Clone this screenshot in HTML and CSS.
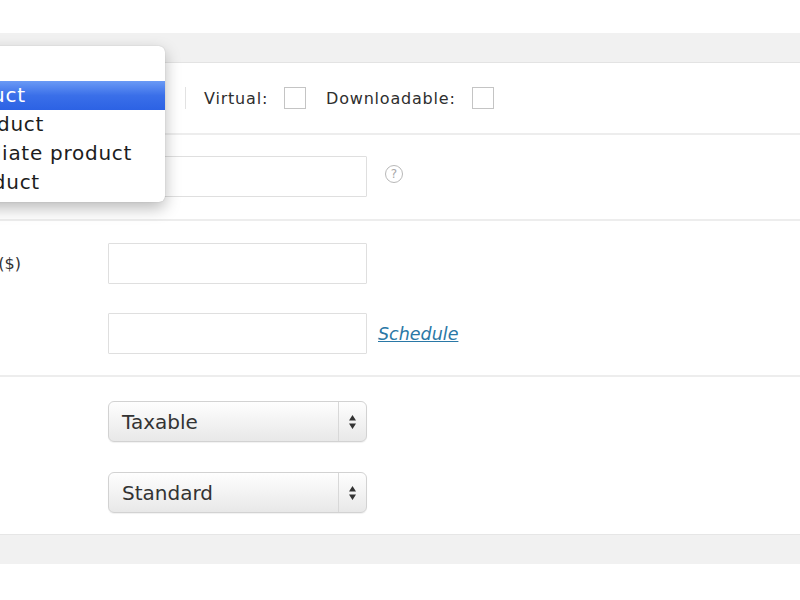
FILE: index.html
```html
<!DOCTYPE html>
<html lang="en">
<head>
  <meta charset="UTF-8">
  <meta name="viewport" content="width=device-width, initial-scale=1.0">
  <title>Product data</title>
  <link rel="stylesheet" href="styles.css">
</head>
<body>
  <div class="frame">
    <div class="panel">
      <div class="row row-type">
        <div class="type-select">Simple product</div>
        <span class="divider"></span>
        <label class="check-label">Virtual:</label>
        <span class="checkbox"></span>
        <label class="check-label">Downloadable:</label>
        <span class="checkbox"></span>
      </div>

      <div class="row">
        <div class="field">
          <span class="label"></span>
          <input type="text" class="text-input">
          <span class="help">?</span>
        </div>
      </div>

      <div class="row row-price">
        <div class="field">
          <span class="label"><span class="clip"><span>Regular price ($)</span></span></span>
          <input type="text" class="text-input">
        </div>
        <div class="field">
          <span class="label"></span>
          <input type="text" class="text-input">
          <a href="#" class="schedule">Schedule</a>
        </div>
      </div>

      <div class="row row-tax">
        <div class="field">
          <span class="label"></span>
          <div class="select">
            <span class="select-text">Taxable</span>
            <span class="select-arrows">
              <svg width="9" height="16" viewBox="0 0 9 16"><path d="M4.5 1 L8 6.5 H1 Z M1 9.5 H8 L4.5 15 Z" fill="#333"/></svg>
            </span>
          </div>
        </div>
        <div class="field">
          <span class="label"></span>
          <div class="select">
            <span class="select-text">Standard</span>
            <span class="select-arrows">
              <svg width="9" height="16" viewBox="0 0 9 16"><path d="M4.5 1 L8 6.5 H1 Z M1 9.5 H8 L4.5 15 Z" fill="#333"/></svg>
            </span>
          </div>
        </div>
      </div>
    </div>
  </div>

  <ul class="menu">
    <li class="menu-blank"></li>
    <li class="menu-item active">Simple product</li>
    <li class="menu-item">Grouped product</li>
    <li class="menu-item">External/Affiliate product</li>
    <li class="menu-item">Variable product</li>
  </ul>
</body>
</html>
```

FILE: styles.css
```css
body {
  margin: 0;
  padding: 0;
  background-color: #fff;
  font-family: 'DejaVu Sans', Verdana, sans-serif;
  color: #333;
  overflow: hidden;
}

.frame {
  margin-top: 33px;
  background-color: #f1f1f1;
  padding: 29px 0;
}

.panel {
  background-color: #fff;
  border-top: 1px solid #e3e3e3;
  border-bottom: 1px solid #e6e6e6;
}

.row {
  border-top: 2px solid #ededed;
}

.row-type {
  border-top: none;
  height: 70px;
  display: flex;
  align-items: center;
}

.type-select {
  width: 165px;
  color: transparent;
}

.divider {
  width: 1px;
  height: 22px;
  background-color: #e2e2e2;
  margin: 0 18px 0 20px;
}

.check-label {
  font-size: 16px;
  letter-spacing: 0.8px;
  color: #2e2e2e;
}

.checkbox {
  width: 20px;
  height: 20px;
  border: 1px solid #c4c4c4;
  background-color: #fff;
  margin: 0 20px 0 16px;
}

.row > .field:first-child {
  padding-top: 21px;
}

.row > .field:last-child {
  padding-bottom: 22px;
}

.row-price > .field:first-child {
  padding-top: 22px;
}

.row-price > .field + .field {
  margin-top: 29px;
}

.row-price > .field:last-child {
  padding-bottom: 21px;
}

.row-tax > .field:first-child {
  padding-top: 24px;
}

.row-tax > .field + .field {
  margin-top: 30px;
}

.row-tax > .field:last-child {
  padding-bottom: 21px;
}

.field {
  display: flex;
  align-items: center;
}

.label {
  width: 108px;
  flex-shrink: 0;
  font-size: 16px;
  color: #333;
  display: flex;
}

.clip {
  width: 21px;
  overflow: hidden;
  display: flex;
  justify-content: flex-end;
  white-space: nowrap;
}

.clip span {
  flex-shrink: 0;
}

.text-input {
  box-sizing: border-box;
  width: 259px;
  height: 41px;
  margin: 0;
  border: 1px solid #dfdfdf;
  border-radius: 1px;
  background-color: #fff;
  outline: none;
}

.help {
  width: 16px;
  height: 16px;
  margin: 0 0 6px 18px;
  border: 1.5px solid #b8b8b8;
  border-radius: 50%;
  color: #a8a8a8;
  font-size: 12px;
  line-height: 16px;
  text-align: center;
}

.schedule {
  margin-left: 11px;
  font-size: 17.5px;
  font-style: italic;
  color: #2a78a6;
  text-decoration: underline;
}

.select {
  box-sizing: border-box;
  width: 259px;
  height: 41px;
  display: flex;
  align-items: stretch;
  border: 1px solid #d2d2d2;
  border-radius: 6px;
  background: linear-gradient(#fefefe, #f2f2f2 55%, #e8e8e8);
  box-shadow: 0 1px 1px rgba(0, 0, 0, 0.06);
}

.select-text {
  flex: 1;
  display: flex;
  align-items: center;
  padding-left: 13px;
  font-size: 20px;
  color: #333;
}

.select-arrows {
  width: 27px;
  border-left: 1px solid #d8d8d8;
  display: flex;
  align-items: center;
  justify-content: center;
}

.menu {
  position: absolute;
  top: 46px;
  left: -156px;
  width: 321px;
  margin: 0;
  padding: 6px 0 5px;
  list-style: none;
  background-color: #fff;
  border-radius: 6px;
  box-shadow: 0 6px 16px rgba(0, 0, 0, 0.28), 0 0 1px rgba(0, 0, 0, 0.25);
}

.menu-blank {
  height: 29px;
}

.menu-item {
  height: 29px;
  line-height: 29px;
  padding-left: 20px;
  font-size: 20px;
  letter-spacing: 0.73px;
  color: #1c1c1c;
  white-space: nowrap;
}

.menu-item.active {
  background: linear-gradient(#6a9af5, #3a6fe9 50%, #2c62e4);
  color: #fff;
}
```
